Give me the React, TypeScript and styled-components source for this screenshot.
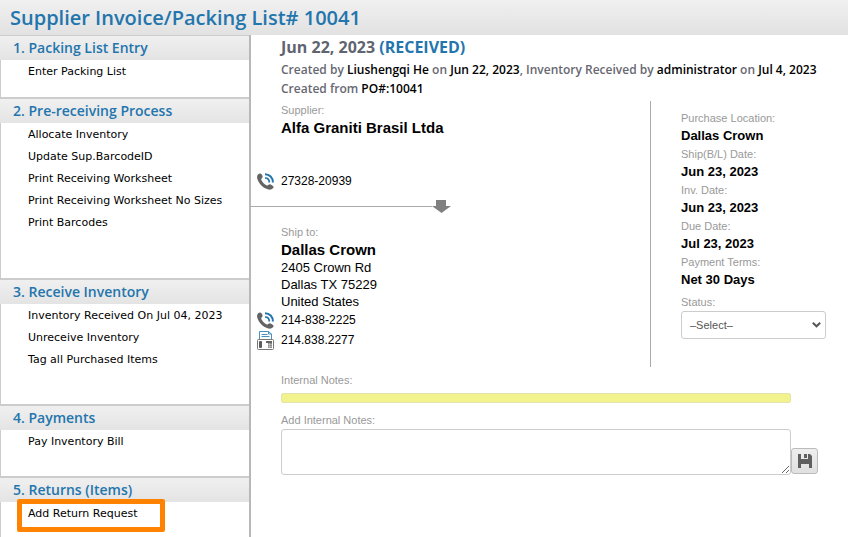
import React from "react";
import styled, { createGlobalStyle } from "styled-components";

const humanist = `"Open Sans", "Noto Sans", sans-serif`;
const wide = `"DejaVu Sans", Verdana, sans-serif`;
const plain = `"Liberation Sans", Arial, sans-serif`;
const blue = "#2375ad";

const GlobalStyle = createGlobalStyle`
  * { box-sizing: border-box; }
  body { margin: 0; background: #fff; color: #000; font-family: ${plain}; }
  a { color: inherit; text-decoration: none; }
`;

const Page = styled.div`
  display: flex;
  flex-direction: column;
  height: 100vh;
  overflow: hidden;
`;

const TopBar = styled.header`
  flex: none;
  padding: 3px 10px 2px;
  background: linear-gradient(#f0f0f0, #e2e2e2);
`;

const Title = styled.h1`
  margin: 0;
  font: 600 20px/30px ${humanist};
  color: ${blue};
`;

const Columns = styled.div`
  display: flex;
  flex: 1;
  min-height: 0;
`;

const Sidebar = styled.nav`
  display: flex;
  flex-direction: column;
  flex: none;
  width: 251px;
  border-right: 2px solid #b8b8b8;
`;

const Section = styled.section<{ $room: number; $first?: boolean }>`
  padding-bottom: ${(p) => p.$room}px;
  border-top: ${(p) => (p.$first ? 1 : 2)}px solid #ccc;
  box-shadow: inset 1px 0 #ccc;
  &:last-child { flex: 1; }
`;

const SectionTitle = styled.h2`
  margin: 0;
  padding: 0 13px;
  font: 600 14px/24px ${humanist};
  color: ${blue};
  background: linear-gradient(#f0f0f0, #e4e4e4);
`;

const LinkList = styled.ul`
  margin: 0;
  padding: 1px 0 0 28px;
  list-style: none;
`;

const LinkItem = styled.li`
  position: relative;
  font: 11px/22px ${wide};
`;

const Highlight = styled.span`
  position: absolute;
  left: -11px;
  top: -4px;
  width: 148px;
  height: 33px;
  border: 5px solid #ff8300;
  border-radius: 2px;
  pointer-events: none;
`;

const Main = styled.main`
  flex: 1;
  min-width: 0;
`;

const Summary = styled.div`
  padding: 2px 0 0 30px;
`;

const StatusLine = styled.h2`
  margin: 0;
  font: 700 16px/20px ${humanist};
  color: #5f6470;
  span { color: ${blue}; }
`;

const Meta = styled.p`
  margin: 0;
  font: 600 12px/19px ${humanist};
  color: #686872;
  white-space: nowrap;
  &:first-of-type { margin-top: 3px; }
  b { color: #000; font-weight: 600; }
`;

const Details = styled.div`
  display: grid;
  grid-template-columns: minmax(0, 1fr) 198px;
  margin-top: 3px;
`;

const Parties = styled.div`
  display: flex;
  flex-direction: column;
`;

const Party = styled.div`
  padding-left: 30px;
`;

const Label = styled.label`
  display: block;
  font: 11px/18px ${plain};
  color: #999;
`;

const Name = styled.div`
  font: bold 15px/18px ${plain};
`;

const Address = styled.address`
  font: normal 13px/17px ${plain};
`;

const Contact = styled.div<{ $gap: number }>`
  display: flex;
  align-items: center;
  gap: 7px;
  height: 20px;
  margin: ${(p) => p.$gap}px 0 0 -24px;
  font: 12px/20px ${plain};
  svg { flex: none; }
`;

const Flow = styled.div`
  display: flex;
  align-items: center;
  width: 50%;
  margin: 9px 0 10px;
  &::before { content: ""; flex: 1; height: 1px; background: #aaa; }
`;

const Terms = styled.div`
  min-height: 266px;
  padding: 8px 22px 0 30px;
  border-left: 1px solid #aaa;
`;

const Value = styled.div`
  font: bold 13px/18px ${plain};
`;

const StatusField = styled.div`
  padding-top: 4px;
`;

const SelectWrap = styled.div`
  position: relative;
  svg { position: absolute; right: 5px; top: 10px; pointer-events: none; }
`;

const Select = styled.select`
  display: block;
  width: 100%;
  height: 28px;
  padding: 0 8px;
  appearance: none;
  border: 1px solid #ccc;
  border-radius: 3px;
  background: #fff;
  color: #555;
  font: 11px ${plain};
`;

const Notes = styled.div`
  padding: 4px 30px 0;
`;

const NotesBox = styled.div`
  height: 10px;
  margin: 4px 27px 8px 0;
  border: 1px solid #e3e3b0;
  border-radius: 2px;
  background: #f3f38d;
`;

const Editor = styled.div`
  display: flex;
  align-items: flex-end;
`;

const TextArea = styled.textarea`
  flex: 1;
  min-width: 0;
  height: 46px;
  border: 1px solid #ccc;
  border-radius: 3px;
  font: 12px ${plain};
`;

const SaveButton = styled.button`
  display: grid;
  place-items: center;
  width: 27px;
  height: 26px;
  margin-bottom: 1px;
  padding: 0;
  border: 1px solid #bbb;
  border-radius: 3px;
  background: linear-gradient(#eee, #e0e0e0);
`;

const PhoneIcon = () => (
  <svg width="17" height="17" viewBox="0 0 17 17" aria-hidden="true">
    <path fill="#646464" d="M1.2 1.2C2.6.1 3.8.3 4.7 1.6c.9 1.3 1.3 2.5.3 3.5-.8.8-1 1.4-.4 2.5.9 1.8 2.4 3.4 4.2 4.5 1 .6 1.7.6 2.4-.1 1-1 2-.8 3.4 0l1.3.9c1 .7.9 1.5.2 2.2-1.4 1.6-3.2 2-5.4 1.2C5.500 14.600 1.900 10.700.3 5.700-.2 3.900 0 2.300 1.200 1.200z" />
    <g fill="none" stroke={blue}>
      <path strokeWidth="2" d="M8 1.200c4.600 0 7.900 3.300 7.900 8.200" />
      <path strokeWidth="1.700" d="M8 5c2.700 0 4.300 1.700 4.300 4.400" />
    </g>
  </svg>
);

const FaxIcon = () => (
  <svg width="17" height="19" viewBox="0 0 17 19" aria-hidden="true">
    <path fill="#fff" stroke="#4b91bf" d="M2.500 8V.5h9l3 2.500v5" />
    <path stroke="#4b91bf" d="M4.500 3.500h6M4.500 5.500h8M11.500.5v2.500h3" fill="none" />
    <rect x=".5" y="8.500" width="16" height="10" rx="1" fill="#fff" stroke="#777" />
    <rect x="2" y="10" width="3" height="7" rx="1" fill="#5c5c5c" />
    <path fill="#666" d="M9 10h6v2H9z" />
    <path fill="#888" d="M11 12h4v5h-4z" />
    <path stroke="#ccc" strokeWidth=".6" d="M11 13.500h4M11 15.500h4M12.500 12v5" />
  </svg>
);

const ArrowIcon = () => (
  <svg width="19" height="13" viewBox="0 0 19 13" aria-hidden="true">
    <path fill="#808080" d="M4 0h10v6h5l-9.500 7L0 6h4z" />
  </svg>
);

const ChevronIcon = () => (
  <svg width="9" height="8" viewBox="0 0 9 8" aria-hidden="true">
    <path d="M.8 1.800 4.500 5.300 8.200 1.800" fill="none" stroke="#555" strokeWidth="2" />
  </svg>
);

const SaveIcon = () => (
  <svg width="14" height="14" viewBox="0 0 14 14" aria-hidden="true">
    <path fill="#606060" fillRule="evenodd" d="M0 0h3v5h7V0h2l2 2v12h-3v-4H3v4H0zM6 0h3v4H6z" />
  </svg>
);

const sections = [
  { title: "1. Packing List Entry", room: 14, links: ["Enter Packing List"] },
  {
    title: "2. Pre-receiving Process",
    room: 44,
    links: [
      "Allocate Inventory",
      "Update Sup.BarcodeID",
      "Print Receiving Worksheet",
      "Print Receiving Worksheet No Sizes",
      "Print Barcodes",
    ],
  },
  {
    title: "3. Receive Inventory",
    room: 33,
    links: ["Inventory Received On Jul 04, 2023", "Unreceive Inventory", "Tag all Purchased Items"],
  },
  { title: "4. Payments", room: 23, links: ["Pay Inventory Bill"] },
  { title: "5. Returns (Items)", room: 0, links: ["Add Return Request"] },
];

const terms = [
  ["Purchase Location:", "Dallas Crown"],
  ["Ship(B/L) Date:", "Jun 23, 2023"],
  ["Inv. Date:", "Jun 23, 2023"],
  ["Due Date:", "Jul 23, 2023"],
  ["Payment Terms:", "Net 30 Days"],
];

export default function App() {
  return (
    <Page>
      <GlobalStyle />
      <TopBar>
        <Title>Supplier Invoice/Packing List# 10041</Title>
      </TopBar>
      <Columns>
        <Sidebar>
          {sections.map((section, i) => (
            <Section key={section.title} $room={section.room} $first={i === 0}>
              <SectionTitle>{section.title}</SectionTitle>
              <LinkList>
                {section.links.map((text) => (
                  <LinkItem key={text}>
                    <a href="#">{text}</a>
                    {text === "Add Return Request" && <Highlight />}
                  </LinkItem>
                ))}
              </LinkList>
            </Section>
          ))}
        </Sidebar>
        <Main>
          <Summary>
            <StatusLine>
              Jun 22, 2023 <span>(RECEIVED)</span>
            </StatusLine>
            <Meta>
              Created by <b>Liushengqi He</b> on <b>Jun 22, 2023</b>, Inventory Received by <b>administrator</b> on{" "}
              <b>Jul 4, 2023</b>
            </Meta>
            <Meta>
              Created from <b>PO#:10041</b>
            </Meta>
          </Summary>
          <Details>
            <Parties>
              <Party>
                <Label as="div">Supplier:</Label>
                <Name>Alfa Graniti Brasil Ltda</Name>
                <Contact $gap={34}>
                  <PhoneIcon />
                  27328-20939
                </Contact>
              </Party>
              <Flow>
                <ArrowIcon />
              </Flow>
              <Party>
                <Label as="div">Ship to:</Label>
                <Name>Dallas Crown</Name>
                <Address>
                  2405 Crown Rd
                  <br />
                  Dallas TX 75229
                  <br />
                  United States
                </Address>
                <Contact $gap={0}>
                  <PhoneIcon />
                  214-838-2225
                </Contact>
                <Contact $gap={0}>
                  <FaxIcon />
                  214.838.2277
                </Contact>
              </Party>
            </Parties>
            <Terms>
              {terms.map(([label, value]) => (
                <React.Fragment key={label}>
                  <Label as="div">{label}</Label>
                  <Value>{value}</Value>
                </React.Fragment>
              ))}
              <StatusField>
                <Label htmlFor="status">Status:</Label>
                <SelectWrap>
                  <Select id="status">
                    <option>–Select–</option>
                  </Select>
                  <ChevronIcon />
                </SelectWrap>
              </StatusField>
            </Terms>
          </Details>
          <Notes>
            <Label as="div">Internal Notes:</Label>
            <NotesBox />
            <Label htmlFor="notes">Add Internal Notes:</Label>
            <Editor>
              <TextArea id="notes" />
              <SaveButton type="button" aria-label="Save notes">
                <SaveIcon />
              </SaveButton>
            </Editor>
          </Notes>
        </Main>
      </Columns>
    </Page>
  );
}
